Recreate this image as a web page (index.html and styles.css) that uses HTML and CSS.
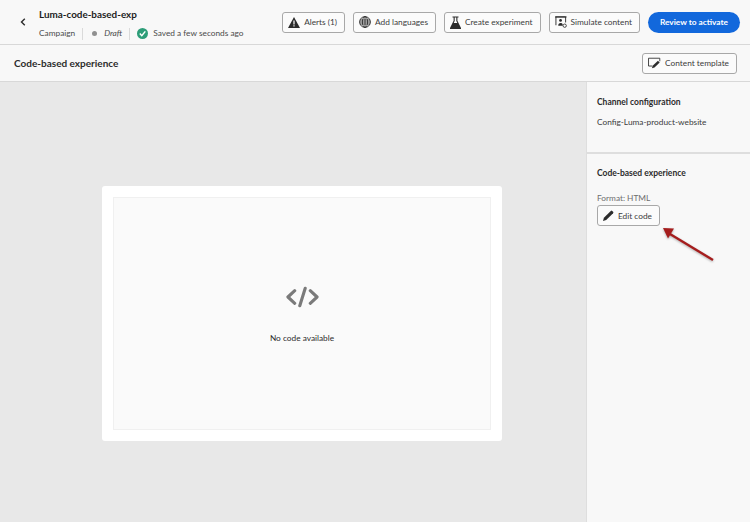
FILE: index.html
```html
<!DOCTYPE html>
<html lang="en">
<head>
<meta charset="utf-8">
<title>Luma-code-based-exp</title>
<link rel="stylesheet" href="styles.css">
</head>
<body>
<div class="page">
  <header class="topbar">
    <button class="back" aria-label="Back"><svg width="6" height="8" viewBox="0 0 6 8"><path d="M4.8 .8 1.5 4l3.3 3.2" fill="none" stroke="#2c2c2c" stroke-width="1.4"/></svg></button>
    <div class="titles">
      <div class="title">Luma-code-based-exp</div>
      <div class="meta">
        <span>Campaign</span><i class="sep"></i>
        <i class="dot"></i><em>Draft</em><i class="sep"></i>
        <svg class="ok" width="11" height="11" viewBox="0 0 11 11"><circle cx="5.5" cy="5.5" r="5.5" fill="#2d9d78"/><path d="M2.8 5.6 4.8 7.7 8.3 3.4" fill="none" stroke="#fff" stroke-width="1.5"/></svg>
        <span>Saved a few seconds ago</span>
      </div>
    </div>
    <div class="actions">
      <button class="btn"><svg width="12" height="11" viewBox="0 0 12 11"><path d="M6 0 12 11H0Z" fill="#2c2c2c"/><path d="M5.400 3.600h1.200v4H5.400zM5.400 8.300h1.200v1.200H5.400z" fill="#fff"/></svg>Alerts (1)</button>
      <button class="btn"><svg width="12" height="12" viewBox="0 0 12 12" fill="none" stroke="#2c2c2c" stroke-width=".9"><circle cx="6" cy="6" r="5.400"/><ellipse cx="6" cy="6" rx="2.600" ry="5.400"/><path d="M1 4h10M.7 6h10.600M1 8h10M6 .6v10.800"/></svg>Add languages</button>
      <button class="btn"><svg width="11" height="13" viewBox="0 0 11 13"><path d="M2.500 .5h6v1H7.400v3.200L11 12v1H0v-1L3.600 4.700V1.500H2.500Z" fill="#2c2c2c"/><path d="M4.700 1.500h1.600v3.500l1 2H3.700l1-2Z" fill="#fff"/></svg>Create experiment</button>
      <button class="btn"><svg width="12" height="12" viewBox="0 0 13 13" fill="none" stroke="#2c2c2c"><path d="M1 10V1h10.500v6" stroke-width="1"/><path d="M0 1h12.500" stroke-width="1.200"/><circle cx="6" cy="4.800" r="1.500" fill="#2c2c2c" stroke="none"/><path d="M3.500 10.500c0-2 1-3 2.500-3s2 .6 2.300 1.500v1.500z" fill="#2c2c2c" stroke="none"/><circle cx="10.500" cy="10.500" r="1.800" stroke-width=".9"/></svg>Simulate content</button>
      <button class="btn primary">Review to activate</button>
    </div>
  </header>
  <div class="subbar">
    <h1>Code-based experience</h1>
    <button class="btn"><svg width="13" height="12" viewBox="0 0 15 13" fill="none" stroke="#2c2c2c"><path d="M5 10H.6V1h13v3.500" stroke-width="1"/><path d="M4.500 12.500 5.400 9.600 11.500 3.800 13.500 5.800 7.500 11.600Z" fill="#2c2c2c" stroke="none"/></svg>Content template</button>
  </div>
  <div class="body">
    <main class="canvas">
      <div class="card">
        <div class="empty">
          <svg width="33" height="22" viewBox="0 0 34 22" fill="none" stroke="#7a7a7a" stroke-width="3.200" stroke-linecap="round" stroke-linejoin="round"><path d="M9 4.500 2 11l7 6.500M25 4.500 32 11l-7 6.500M19.800 2 14.200 20"/></svg>
          <p>No code available</p>
        </div>
      </div>
    </main>
    <aside class="side">
      <section class="panel first">
        <h2>Channel configuration</h2>
        <p>Config-Luma-product-website</p>
      </section>
      <section class="panel">
        <h2>Code-based experience</h2>
        <div class="format">Format: HTML</div>
        <button class="btn"><svg width="11" height="11" viewBox="0 0 11 11"><path d="M0 11 .9 7.800 7.800 .9a1 1 0 0 1 1.400 0l.9.9a1 1 0 0 1 0 1.400L3.200 10.100Z" fill="#2c2c2c"/></svg>Edit code</button>
      </section>
    </aside>
  </div>
  <svg class="arrow" width="58" height="40" viewBox="0 0 58 40"><path d="M52 33 9 7" stroke="#a51d1d" stroke-width="2.400"/><path d="M2 1 13 1.500 7 11.500Z" fill="#a51d1d"/></svg>
</div>
</body>
</html>
```
FILE: styles.css
```css
* { box-sizing: border-box; }
html, body { margin: 0; padding: 0; }
body { font-family: Lato, "Noto Sans", sans-serif; font-size: 8.300px; color: #2c2c2c; background: #f8f8f8; }
.page { position: relative; width: 750px; height: 522px; overflow: hidden; display: flex; flex-direction: column; }
.topbar { height: 45px; flex: none; display: flex; align-items: center; padding: 0 10px 0 20px; background: #f8f8f8; border-bottom: 1px solid #d8d8d8; }
.back { width: 6px; height: 8px; padding: 0; border: 0; background: none; display: flex; }
.titles { margin-left: 13px; margin-top: 4px; white-space: nowrap; }
.title { font-weight: 700; font-size: 9.900px; line-height: 13px; color: #1d1d1d; }
.meta { display: flex; align-items: center; margin-top: 6px; height: 13px; line-height: 13px; color: #4b4b4b; }
.sep { width: 1px; height: 12px; background: #dadada; margin: 0 7px; }
.dot { width: 5px; height: 5px; border-radius: 50%; background: #909090; margin: 0 7px 0 2px; }
.meta em { font-style: italic; }
.ok { margin: 0 5px 0 0; }
.actions { margin-left: auto; display: flex; gap: 8px; align-items: center; }
.btn { height: 21px; display: inline-flex; align-items: center; gap: 4px; padding: 0 7px 0 5px; font: inherit; color: #3c3c3c; background: #fbfbfb; border: 1px solid #a8a8a8; border-radius: 3px; white-space: nowrap; }
.primary { padding: 0 12px; border: 0; border-radius: 11px; background: #1268dc; color: #fff; font-weight: 700; }
.subbar { height: 37px; flex: none; display: flex; align-items: center; justify-content: space-between; padding: 0 13px 0 14px; background: #f8f8f8; border-bottom: 1px solid #d8d8d8; }
h1 { margin: 0; font-size: 10px; font-weight: 700; color: #2c2c2c; }
.body { flex: 1; display: flex; min-height: 0; }
.canvas { flex: 1; background: #e8e8e8; padding: 104px 84px 81px 102px; }
.card { height: 255px; background: #fff; border-radius: 3px; padding: 11px; display: flex; }
.empty { flex: 1; border: 1px solid #f0f0f0; background: #fafafa; display: flex; flex-direction: column; align-items: center; padding-top: 88px; }
.empty p { margin: 24px 0 0; line-height: 13px; }
.side { width: 164px; flex: none; background: #f8f8f8; border-left: 1px solid #dedede; }
.panel { padding: 13px 10px; }
.panel.first { height: 72px; padding-top: 14px; border-bottom: 2px solid #dedede; }
h2 { margin: 0; font-size: 8.500px; line-height: 13px; font-weight: 700; color: #2c2c2c; }
.panel p { margin: 7px 0 0; line-height: 13px; color: #3c3c3c; }
.format { margin: 12px 0 1px; line-height: 12px; color: #6e6e6e; }
.arrow { position: absolute; left: 661px; top: 227px; filter: drop-shadow(0 1px 1px rgba(0,0,0,.3)); }
```
